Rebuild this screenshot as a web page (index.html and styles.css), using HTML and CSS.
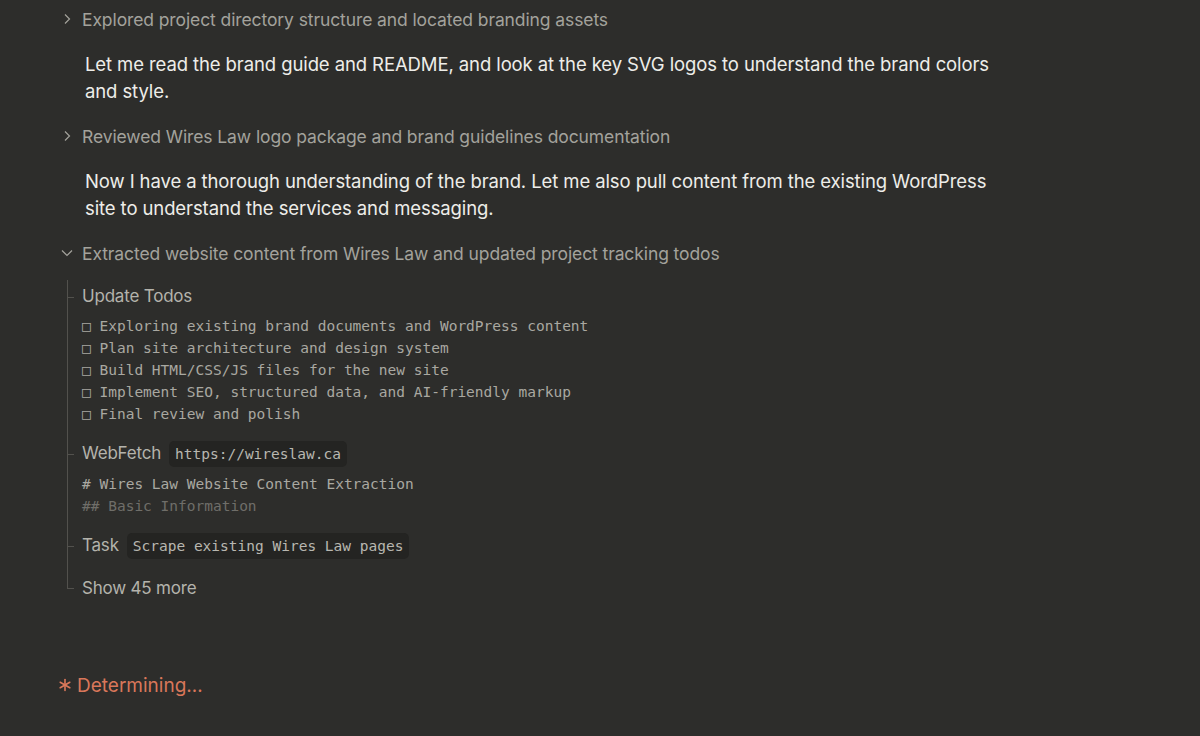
FILE: index.html
```html
<!DOCTYPE html>
<html>
<head>
<meta charset="utf-8">
<link rel="stylesheet" href="styles.css">
</head>
<body>
<main class="log">
  <div class="step">
    <svg class="chev" width="12" height="12" viewBox="0 0 12 12"><path d="M4 1.5 L8.5 6 L4 10.5" fill="none" stroke="currentColor" stroke-width="1.2"/></svg>
    <span>Explored project directory structure and located branding assets</span>
  </div>
  <p class="para">Let me read the brand guide and README, and look at the key SVG logos to understand the brand colors and style.</p>
  <div class="step">
    <svg class="chev" width="12" height="12" viewBox="0 0 12 12"><path d="M4 1.5 L8.5 6 L4 10.5" fill="none" stroke="currentColor" stroke-width="1.2"/></svg>
    <span>Reviewed Wires Law logo package and brand guidelines documentation</span>
  </div>
  <p class="para">Now I have a thorough understanding of the brand. Let me also pull content from the existing WordPress site to understand the services and messaging.</p>
  <div class="step">
    <svg class="chev" width="12" height="12" viewBox="0 0 12 12"><path d="M1 3.5 L6 8.5 L11 3.5" fill="none" stroke="currentColor" stroke-width="1.2"/></svg>
    <span>Extracted website content from Wires Law and updated project tracking todos</span>
  </div>
  <div class="tree">
    <div class="item first">
      <div class="head"><span class="tool">Update Todos</span></div>
      <ul class="todos">
        <li>□ Exploring existing brand documents and WordPress content</li>
        <li>□ Plan site architecture and design system</li>
        <li>□ Build HTML/CSS/JS files for the new site</li>
        <li>□ Implement SEO, structured data, and AI-friendly markup</li>
        <li>□ Final review and polish</li>
      </ul>
    </div>
    <div class="item">
      <div class="head"><span class="tool">WebFetch</span><code class="chip">https://wireslaw.ca</code></div>
      <div class="output">
        <div># Wires Law Website Content Extraction</div>
        <div class="fade">## Basic Information</div>
      </div>
    </div>
    <div class="item">
      <div class="head"><span class="tool">Task</span><code class="chip">Scrape existing Wires Law pages</code></div>
    </div>
    <div class="item last">
      <div class="head"><span class="tool">Show 45 more</span></div>
    </div>
  </div>
  <div class="status">
    <svg class="star" width="14" height="14" viewBox="0 0 14 14"><g stroke="currentColor" stroke-width="1.6" stroke-linecap="round"><path d="M7 1.5 V12.5"/><path d="M2.2 4.25 L11.8 9.75"/><path d="M2.2 9.75 L11.8 4.25"/></g></svg>
    <span>Determining…</span>
  </div>
</main>
</body>
</html>
```
FILE: styles.css
```css
html, body {
  margin: 0;
  padding: 0;
  background: #2d2d2b;
}
body {
  font-family: "Inter", "Noto Sans", sans-serif;
  color: #eeede9;
  width: 1200px;
  height: 736px;
  overflow: hidden;
}
.log {
  padding: 5.5px 0 0 60px;
  display: flex;
  flex-direction: column;
}
.step {
  display: flex;
  align-items: center;
  gap: 9px;
  height: 27px;
  font-size: 17.5px;
  color: #a3a29c;
  letter-spacing: -0.1px;
}
.chev {
  color: #a3a29c;
  margin-left: 1px;
}
.para {
  margin: 18px 0 18px 25px;
  font-size: 18.5px;
  line-height: 27px;
  width: 915px;
  letter-spacing: -0.1px;
}
.tree {
  margin: 13.5px 0 0 7px;
  display: flex;
  flex-direction: column;
}
.item {
  position: relative;
  padding: 15px 0 0 15px;
}
.item.first {
  padding-top: 3px;
}
.item.last {
  padding-top: 15px;
}
.item::before {
  content: "";
  position: absolute;
  left: 0;
  top: 0;
  bottom: 0;
  width: 1px;
  background: #52514d;
}
.item.last::before {
  bottom: auto;
  height: 28.5px;
}
.item::after {
  content: "";
  position: absolute;
  left: 0;
  width: 7px;
  height: 1px;
  background: #52514d;
  top: 29px;
}
.item.first::after {
  top: 16.5px;
}
.item.last::after {
  top: 28.5px;
}
.head {
  display: flex;
  align-items: center;
  gap: 8px;
  min-height: 27px;
}
.item:not(.first):not(.last) .head {
  height: 28px;
}
.tool {
  font-size: 17px;
  letter-spacing: -0.2px;
  color: #b4b3ac;
  line-height: 27px;
}
.chip {
  font-family: "DejaVu Sans Mono", monospace;
  font-size: 14.5px;
  color: #b8b7b0;
  background: #242422;
  border-radius: 5px;
  height: 26px;
  line-height: 26px;
  padding: 0 6px;
}
.todos {
  list-style: none;
  margin: 4.5px 0 0 0;
  padding: 0;
  font-family: "DejaVu Sans Mono", monospace;
  font-size: 14.5px;
  line-height: 22px;
  color: #a9a8a1;
}
.output {
  margin-top: 5px;
  font-family: "DejaVu Sans Mono", monospace;
  font-size: 14.5px;
  line-height: 22px;
  color: #a9a8a1;
}
.output .fade {
  color: #6f6e69;
}
.status {
  margin: 70px 0 0 -2px;
  display: flex;
  align-items: center;
  gap: 5px;
  color: #d9775a;
  font-size: 19px;
  height: 27px;
}
.star {
  color: #d9775a;
}
```
